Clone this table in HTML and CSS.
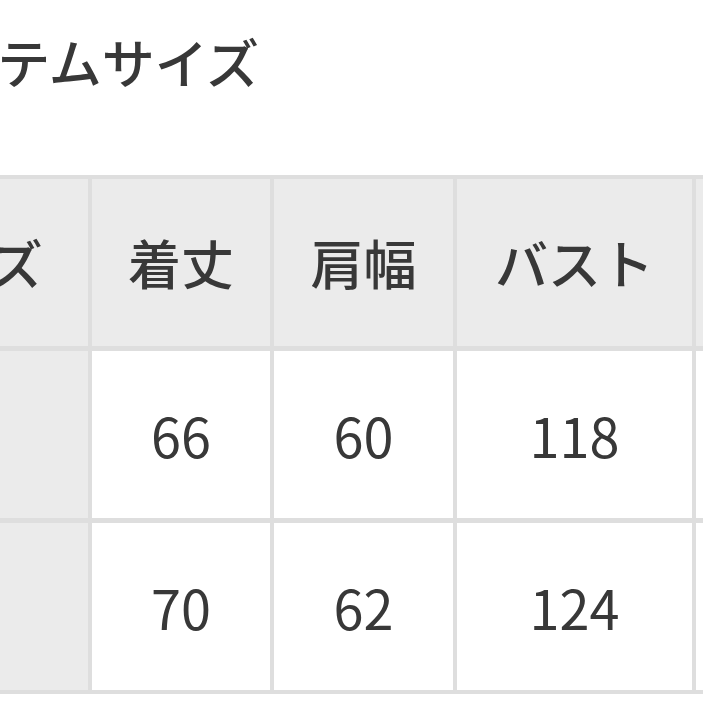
FILE: index.html
```html
<!DOCTYPE html>
<html lang="ja">
<head>
<meta charset="utf-8">
<link rel="stylesheet" href="styles.css">
</head>
<body>
<div class="page">
  <h2 class="title">アイテムサイズ</h2>
  <div class="size-table">
    <div class="cell head">サイズ</div>
    <div class="cell head">着丈</div>
    <div class="cell head">肩幅</div>
    <div class="cell head">バスト</div>
    <div class="cell head">袖丈</div>

    <div class="cell label">M</div>
    <div class="cell num">66</div>
    <div class="cell num">60</div>
    <div class="cell num">118</div>
    <div class="cell num">58</div>

    <div class="cell label">L</div>
    <div class="cell num">70</div>
    <div class="cell num">62</div>
    <div class="cell num">124</div>
    <div class="cell num">60</div>
  </div>
</div>
</body>
</html>
```

FILE: styles.css
```css
html, body {
  margin: 0;
  padding: 0;
  background: #ffffff;
  overflow: hidden;
}

.page {
  width: 703px;
  height: 703px;
  overflow: hidden;
  font-family: "Noto Sans CJK JP", "Noto Sans", sans-serif;
  color: #383838;
}

.title {
  margin: 31px 0 0 -105px;
  font-size: 53px;
  font-weight: 500;
  line-height: 60px;
  white-space: nowrap;
}

.size-table {
  margin: 84px 0 0 -164px;
  display: grid;
  grid-template-columns: 248px 178px 179px 235px 200px;
  grid-auto-rows: 167px;
  gap: 5px 4px;
  padding: 4px;
  background: #dedede;
  width: max-content;
}

.cell {
  background: #ffffff;
  display: flex;
  align-items: center;
  justify-content: center;
  font-size: 53px;
  font-weight: 500;
  line-height: 1;
}

.cell.num {
  font-size: 54px;
  font-weight: 400;
}

.cell.head,
.cell.label {
  background: #ebebeb;
}

.cell.label {
  color: transparent;
}
```
